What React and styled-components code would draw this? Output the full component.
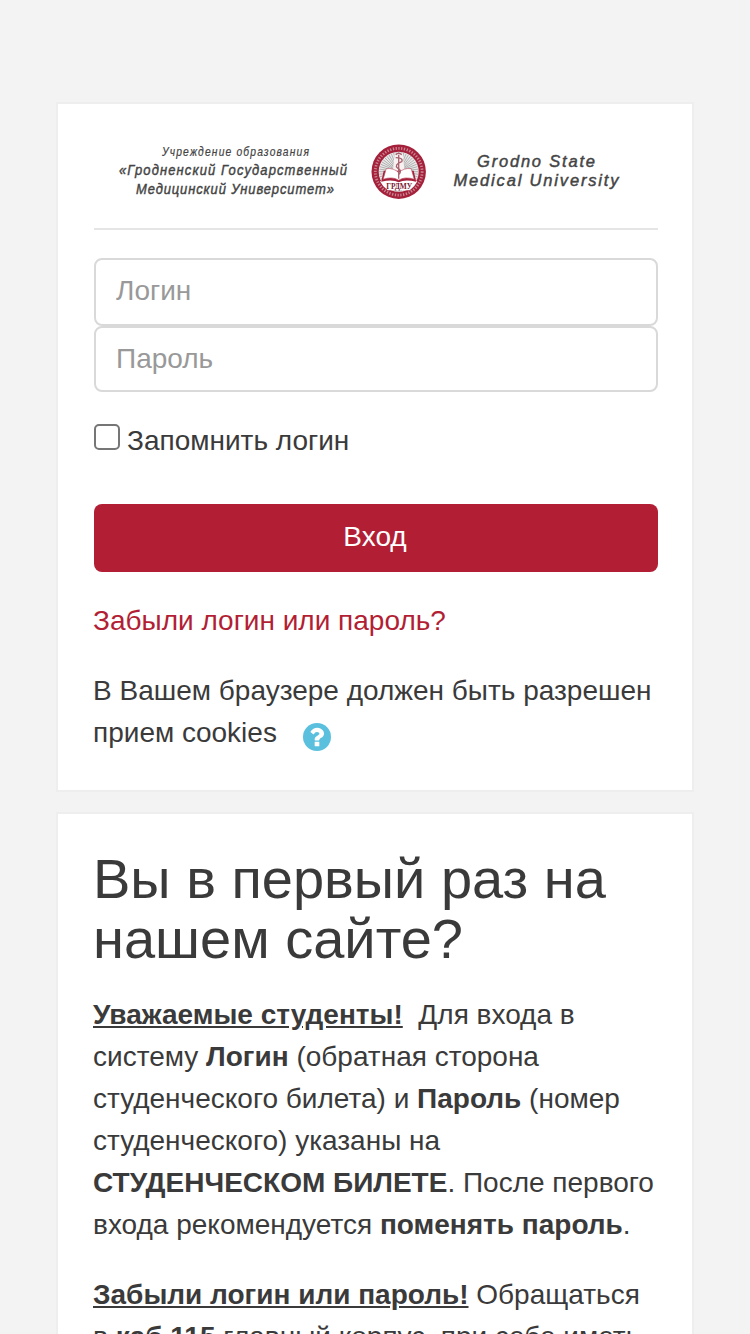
import React, { useState } from 'react';
import styled, { createGlobalStyle } from 'styled-components';

const GlobalStyle = createGlobalStyle`
  * {
    box-sizing: border-box;
  }

  body {
    margin: 0;
    background-color: #f3f3f3;
    color: #3a3a3a;
    font-family: "Liberation Sans", Arial, sans-serif;
    font-size: 28px;
    line-height: 42px;
  }
`;

const Page = styled.main`
  display: flex;
  flex-direction: column;
  gap: 20px;
  height: 1334px;
  padding: 102px 56px 0;
  overflow: hidden;
`;

const Card = styled.section`
  flex: none;
  padding: 36px 34px 36px 36px;
  border: 2px solid #eeeeee;
  background-color: #fff;
`;

const LogoHeader = styled.h1`
  display: flex;
  height: 90px;
  margin: 0 0 28px;
  border-bottom: 2px solid #e5e5e5;
  font-weight: normal;
`;

const LogoImage = styled.svg`
  width: 564px;
  height: 64px;
  font-family: "Liberation Sans", Arial, sans-serif;
  font-style: italic;
  fill: #444;
`;

const LoginForm = styled.form`
  display: flex;
  flex-direction: column;
`;

const Input = styled.input`
  width: 100%;
  height: ${(props) => props.$height};
  padding: ${(props) => props.$padding};
  border: 2px solid #d9d9d9;
  border-radius: 8px;
  background-color: #fff;
  color: #55595c;
  font: inherit;

  &::placeholder {
    color: #999;
    opacity: 1;
  }
`;

const RememberLabel = styled.label`
  display: flex;
  align-items: flex-start;
  gap: 7px;
  height: 42px;
  margin: 28px 0 42px;
`;

const Checkbox = styled.input`
  appearance: none;
  width: 26px;
  height: 26px;
  margin: 4px 0 0;
  border: 2px solid #767676;
  border-radius: 5px;
  background-color: #fff;

  &:checked {
    background-color: #b21f35;
  }
`;

const LoginButton = styled.button`
  height: 68px;
  padding: 0 2px 2px 0;
  border: none;
  border-radius: 8px;
  background-color: #b21f35;
  color: #fff;
  font: inherit;
  cursor: pointer;
`;

const ForgotLink = styled.a`
  display: block;
  margin: 28px 0 28px -1px;
  color: #b21f35;
  text-decoration: none;
`;

const Paragraph = styled.p`
  margin: 0 0 28px -1px;
`;

const CookiesNotice = styled(Paragraph)`
  margin-bottom: 0;
`;

const HelpIcon = styled.svg`
  width: 28px;
  height: 28px;
  margin-left: 26px;
  vertical-align: -8.5px;
`;

const Title = styled.h2`
  margin: -1px 0 25px -1px;
  font-size: 56px;
  font-weight: normal;
  line-height: 60px;
`;

const Underlined = styled.strong`
  text-decoration: underline;
`;

// rays behind the book and the torch
const rays = Array.from({ length: 48 }, (_, i) => (i * Math.PI) / 24);

// one line of the condensed, widely spaced logo lettering
function LogoLine({ x, y, size, width, squeeze, children }) {
  return (
    <text transform={`translate(${x} ${y}) scale(${squeeze} 1)`} fontSize={size} textLength={width / squeeze}>
      {children}
    </text>
  );
}

function Logo() {
  return (
    <LogoImage viewBox="94 140 564 64" role="img" aria-label="Grodno State Medical University">
      <g stroke="#444" strokeWidth="0.2">
        <LogoLine x={162} y={156.3} size={12} width={147} squeeze={0.86}>Учреждение образования</LogoLine>
      </g>
      <g stroke="#444" strokeWidth="0.45">
        <LogoLine x={119} y={175.3} size={15.5} width={228} squeeze={0.84}>«Гродненский Государственный</LogoLine>
        <LogoLine x={136} y={194.2} size={15.5} width={198} squeeze={0.84}>Медицинский Университет»</LogoLine>
        <LogoLine x={477} y={166.7} size={16} width={118} squeeze={1.03}>Grodno State</LogoLine>
        <LogoLine x={453.5} y={185.5} size={16} width={165} squeeze={1.03}>Medical University</LogoLine>
      </g>
      <g transform="translate(398.7 171.7)">
        <circle r="27.2" fill="#a5203a" />
        <circle r="23.4" fill="none" stroke="#c98592" strokeWidth="2.8" strokeDasharray="1.3 1.5" />
        <circle r="20" fill="#e9e7e7" />
        <g stroke="#a9a9a9" strokeWidth="0.9">
          {rays.map((a) => (
            <line key={a} x1={Math.cos(a) * 6} y1={Math.sin(a) * 6} x2={Math.cos(a) * 19.5} y2={Math.sin(a) * 19.5} />
          ))}
        </g>
        <path d="M-4 -18 L-6 0 H6 L4 -18Z" fill="#f7f1f1" />
        <path d="M-18.700 9.500 Q-6 7 0 10 Q6 7 18.700 9.500 Q16 15 11 18.500 H-11 Q-16 15 -18.700 9.500Z" fill="#fff" />
        <path d="M-15 -1 L-17.500 10 Q-6 7.500 0 10.500 Q6 7.500 17.500 10 L15 -1Z" fill="#a5203a" />
        <path
          d="M-12.500 -3 L-15.500 7.500 Q-6 4.500 0 8.500 Q6 4.500 15.500 7.500 L12.500 -3 Q5 -4 0 1 Q-5 -4 -12.500 -3Z"
          fill="#fff"
          stroke="#b9485c"
          strokeWidth="0.6"
        />
        <path
          d="M0 7 V-17 M-3 -17 Q0 -20 3 -17 M-3 -14 Q5 -14 3 -10 Q-5 -7 -1 -3.500 Q4 -1 0 3"
          fill="none"
          stroke="#a8616d"
          strokeWidth="1.3"
        />
        <text
          x="-12.5"
          y="17.3"
          fontFamily="Liberation Serif, serif"
          fontSize="8"
          fontStyle="normal"
          fontWeight="bold"
          textLength="26"
          lengthAdjust="spacingAndGlyphs"
          fill="#7c2033"
        >
          ГРДМУ
        </text>
      </g>
    </LogoImage>
  );
}

function App() {
  const [username, setUsername] = useState('');
  const [password, setPassword] = useState('');
  const [remember, setRemember] = useState(false);

  const handleSubmit = (event) => {
    event.preventDefault();
  };

  return (
    <>
      <GlobalStyle />
      <Page>
        <Card>
          <LogoHeader>
            <Logo />
          </LogoHeader>
          <LoginForm onSubmit={handleSubmit}>
            <Input
              $height="68px"
              $padding="0 20px 2px"
              type="text"
              placeholder="Логин"
              value={username}
              onChange={(e) => setUsername(e.target.value)}
            />
            <Input
              $height="66px"
              $padding="0 20px"
              type="password"
              placeholder="Пароль"
              value={password}
              onChange={(e) => setPassword(e.target.value)}
            />
            <RememberLabel>
              <Checkbox type="checkbox" checked={remember} onChange={(e) => setRemember(e.target.checked)} />
              Запомнить логин
            </RememberLabel>
            <LoginButton type="submit">Вход</LoginButton>
          </LoginForm>
          <ForgotLink href="#forgot">Забыли логин или пароль?</ForgotLink>
          <CookiesNotice>
            В Вашем браузере должен быть разрешен прием cookies
            <HelpIcon viewBox="0 0 1536 1536" aria-label="Справка">
              <circle cx="768" cy="768" r="768" fill="#5bc0de" />
              <path
                d="M896 1248v-192q0-14-9-23t-23-9H672q-14 0-23 9t-9 23v192q0 14 9 23t23 9h192q14 0 23-9t9-23zm256-672q0-88-55.500-163T958 297t-170-41q-243 0-371 213-15 24 8 42l132 100q7 6 19 6 16 0 25-12 53-68 86-92 34-24 86-24 48 0 85.500 26t37.500 59q0 38-20 61t-68 45q-63 28-115.500 86.500T640 892v36q0 14 9 23t23 9h192q14 0 23-9t9-23q0-19 21.500-49.500T972 829q32-18 49-28.500t46-35 44.500-48 28-60.500 12.500-81z"
                fill="#fff"
              />
            </HelpIcon>
          </CookiesNotice>
        </Card>
        <Card>
          <Title>Вы в первый раз на нашем сайте?</Title>
          <Paragraph>
            <Underlined>Уважаемые студенты!</Underlined>&nbsp; Для входа в систему <strong>Логин</strong> (обратная
            сторона студенческого билета) и <strong>Пароль</strong> (номер студенческого) указаны на{' '}
            <strong>СТУДЕНЧЕСКОМ БИЛЕТЕ</strong>. После первого входа рекомендуется{' '}
            <strong>поменять пароль</strong>.
          </Paragraph>
          <Paragraph>
            <Underlined>Забыли логин или пароль!</Underlined> Обращаться в <strong>каб.115</strong> главный корпус, при
            себе иметь
          </Paragraph>
        </Card>
      </Page>
    </>
  );
}

export default App;
